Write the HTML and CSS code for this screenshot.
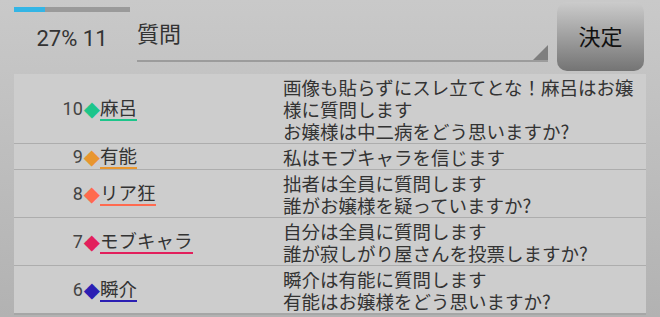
FILE: index.html
```html
<!DOCTYPE html>
<html>
<head>
  <meta charset="UTF-8">
  <title>質問</title>
  <meta name="viewport" content="width=device-width, initial-scale=1.0">
  <link rel="stylesheet" href="styles.css">
</head>
<body>
  <div class="header">
    <div class="status">
      <div class="progress"><div class="progress-fill" style="width: 27%"></div></div>
      <div class="count">27% 11</div>
    </div>
    <div class="question">
      <span class="question-text">質問</span>
      <span class="corner"></span>
    </div>
    <button class="decide">決定</button>
  </div>

  <div class="list">
    <div class="row">
      <div class="num">10<span class="mark green">◆</span></div>
      <div class="name"><span class="green-line">麻呂</span></div>
      <div class="msg">画像も貼らずにスレ立てとな！麻呂はお嬢様に質問します<br>お嬢様は中二病をどう思いますか?</div>
    </div>
    <div class="row">
      <div class="num">9<span class="mark orange">◆</span></div>
      <div class="name"><span class="orange-line">有能</span></div>
      <div class="msg">私はモブキャラを信じます</div>
    </div>
    <div class="row">
      <div class="num">8<span class="mark coral">◆</span></div>
      <div class="name"><span class="coral-line">リア狂</span></div>
      <div class="msg">拙者は全員に質問します<br>誰がお嬢様を疑っていますか?</div>
    </div>
    <div class="row">
      <div class="num">7<span class="mark pink">◆</span></div>
      <div class="name"><span class="pink-line">モブキャラ</span></div>
      <div class="msg">自分は全員に質問します<br>誰が寂しがり屋さんを投票しますか?</div>
    </div>
    <div class="row">
      <div class="num">6<span class="mark blue">◆</span></div>
      <div class="name"><span class="blue-line">瞬介</span></div>
      <div class="msg">瞬介は有能に質問します<br>有能はお嬢様をどう思いますか?</div>
    </div>
  </div>
</body>
</html>
```

FILE: styles.css
```css
body {
  margin: 0;
  height: 317px;
  overflow: hidden;
  font-family: "Noto Sans CJK JP", "Noto Sans", sans-serif;
  color: #333;
  background: linear-gradient(#c9c9c9, #b2b2b2);
}
.header {
  display: flex;
  height: 74px;
}
.status {
  width: 116px;
  margin-left: 14px;
  padding-top: 7px;
}
.progress {
  height: 5px;
  background-color: #9a9a9a;
}
.progress-fill {
  height: 100%;
  background-color: #33b5e5;
}
.count {
  margin-top: 13px;
  text-align: center;
  font-family: Roboto, sans-serif;
  font-size: 22px;
  line-height: 28px;
  color: #333;
}
.question {
  position: relative;
  margin-left: 7px;
  width: 411px;
  height: 62px;
  border-bottom: 2px solid #9c9c9c;
  box-sizing: border-box;
}
.question-text {
  display: block;
  margin-top: 17px;
  font-size: 22px;
  line-height: 30px;
  color: #333;
}
.corner {
  position: absolute;
  right: 0;
  bottom: 0;
  width: 0;
  height: 0;
  border-left: 15px solid transparent;
  border-bottom: 15px solid #7e7e7e;
}
.decide {
  margin: 2px 0 0 9px;
  width: 87px;
  height: 69px;
  border: none;
  border-radius: 10px;
  background: linear-gradient(#cbcbcb, #747474);
  font-family: "Noto Sans CJK JP", sans-serif;
  font-size: 22px;
  color: #111;
  padding: 0 0 4px;
}
.list {
  margin: 0 14px;
  background-color: #cdcdcd;
  border-bottom: 2px solid #a6a6a6;
}
.row {
  display: flex;
  align-items: center;
  padding: 2px 0 1px;
  border-bottom: 1px solid #adadad;
}
.row:last-child {
  border-bottom: none;
}
.num {
  width: 86px;
  height: 22px;
  display: flex;
  justify-content: flex-end;
  align-items: center;
  font-family: Roboto, sans-serif;
  font-size: 18px;
  line-height: 22px;
  color: #444;
}
.mark {
  font-family: "DejaVu Sans", sans-serif;
  font-size: 21px;
  line-height: 22px;
  margin-left: 1px;
}
.name {
  width: 183px;
  height: 22px;
  display: flex;
  align-items: center;
}
.name span {
  padding-bottom: 2px;
  font-size: 18.5px;
  line-height: 20px;
  border-bottom: 2px solid;
  color: #333;
}
.msg {
  flex: 1;
  font-size: 18.5px;
  line-height: 22px;
}
.green { color: #1dc58a; }
.orange { color: #e8962f; }
.coral { color: #ff6a4f; }
.pink { color: #e21f5c; }
.blue { color: #2b1fb3; }
.name .green-line { border-color: #1dc58a; }
.name .orange-line { border-color: #e8962f; }
.name .coral-line { border-color: #ff6a4f; }
.name .pink-line { border-color: #e21f5c; }
.name .blue-line { border-color: #2b1fb3; }
```
